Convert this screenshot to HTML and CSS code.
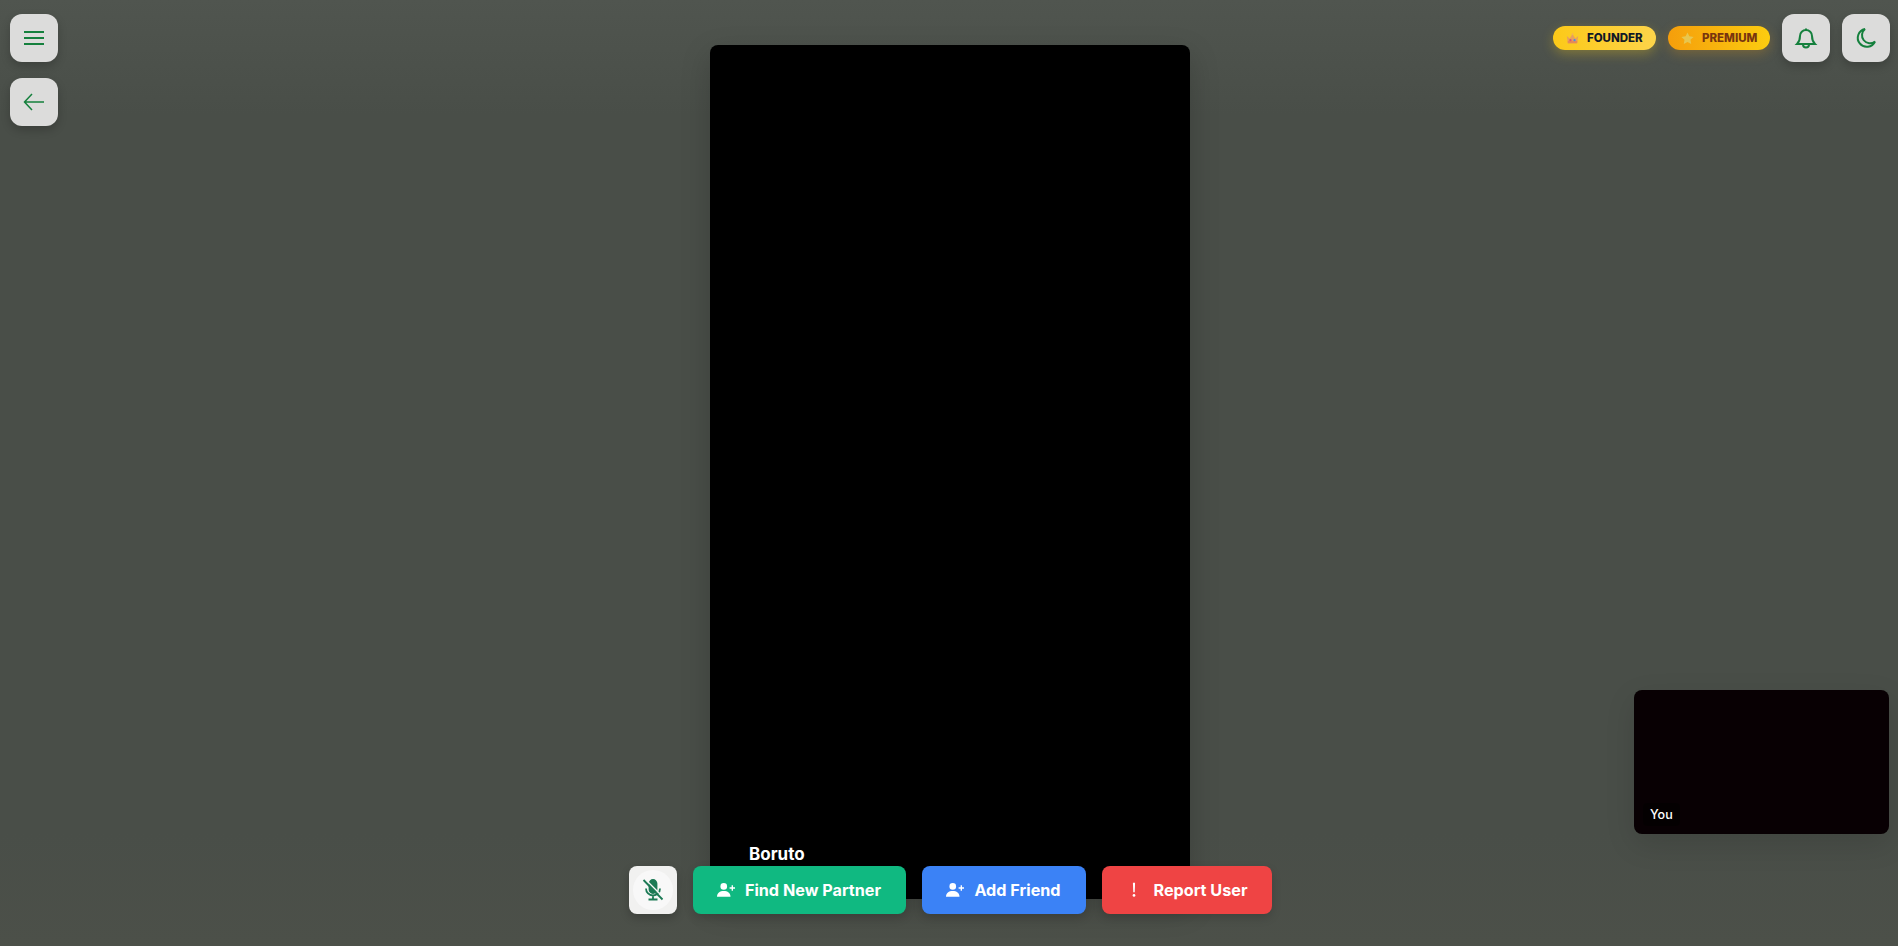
FILE: index.html
```html
<!DOCTYPE html>
<html lang="en">
<head>
  <meta charset="UTF-8">
  <title>Video chat</title>
  <link rel="stylesheet" href="styles.css">
</head>
<body>
  <main class="stage">
    <div class="remote-video"></div>
    <span class="remote-name">Boruto</span>
  </main>

  <div class="top-left">
    <button class="icon-btn" aria-label="Menu">
      <svg viewBox="0 0 24 24" class="icon"><path d="M2 6h20M2 12h20M2 18h20"/></svg>
    </button>
    <button class="icon-btn" aria-label="Back">
      <svg viewBox="0 0 24 24" class="icon thin"><path d="M10 4 2.500 12l7.500 8M2.500 12H22"/></svg>
    </button>
  </div>

  <div class="top-right">
    <span class="badge badge-founder">
      <svg viewBox="0 0 16 16" class="badge-icon">
        <path d="M1 5 4.500 8 8 2.500 11.500 8 15 5l-1.200 8.500H2.200z" fill="#e8a05c"/>
        <rect x="2.200" y="11" width="11.600" height="3" fill="#e58a58"/>
        <circle cx="5.500" cy="10" r="1.400" fill="#d9507a"/>
        <circle cx="10.500" cy="10" r="1.400" fill="#4a8fe0"/>
        <circle cx="8" cy="2.500" r="1.100" fill="#f0b060"/>
      </svg>
      FOUNDER
    </span>
    <span class="badge badge-premium">
      <svg viewBox="0 0 16 16" class="badge-icon">
        <path d="M8 .5l2.300 4.700 5.200.8-3.800 3.600.9 5.200L8 12.400l-4.600 2.400.9-5.200L.5 6l5.200-.8z" fill="#e8c64e"/>
      </svg>
      PREMIUM
    </span>
    <button class="icon-btn" aria-label="Notifications">
      <svg viewBox="0 0 24 24" class="icon"><path d="M12 2.500v1.500M6 10a6 6 0 0 1 12 0c0 4 1.500 6.500 3 8H3c1.500-1.500 3-4 3-8zM9 18.500a3 3 0 0 0 6 0"/></svg>
    </button>
    <button class="icon-btn" aria-label="Dark mode">
      <svg viewBox="0 0 24 24" class="icon"><path d="M11 3a9 9 0 1 0 10 12.500A8 8 0 0 1 11 3z"/></svg>
    </button>
  </div>

  <div class="controls">
    <button class="mic-btn" aria-label="Unmute">
      <span class="mic-inner">
        <svg viewBox="0 0 24 24" class="mic-icon">
          <rect x="8.500" y="2" width="7" height="13" rx="3.500" fill="#1c7a55"/>
          <path d="M5 10.500a7 7 0 0 0 14 0M12 17.500V21.500M7.500 21.500h9"/>
          <path class="mic-gap" d="M4.500 1.500l18 18"/>
          <path d="M2.500 2l19 19.500"/>
        </svg>
      </span>
    </button>
    <button class="action-btn btn-green">
      <svg viewBox="0 0 20 20" class="action-icon">
        <circle cx="7.500" cy="6" r="3.700"/>
        <path d="M0 17.500c0-4.500 3.200-6.500 7.500-6.500s7.500 2 7.500 6.500z"/>
        <path d="M14 7h6v1.500h-6zM16.250 4.750h1.500v6h-1.500z"/>
      </svg>
      Find New Partner
    </button>
    <button class="action-btn btn-blue">
      <svg viewBox="0 0 20 20" class="action-icon">
        <circle cx="7.500" cy="6" r="3.700"/>
        <path d="M0 17.500c0-4.500 3.200-6.500 7.500-6.500s7.500 2 7.500 6.500z"/>
        <path d="M14 7h6v1.500h-6zM16.250 4.750h1.500v6h-1.500z"/>
      </svg>
      Add Friend
    </button>
    <button class="action-btn btn-red">
      <svg viewBox="0 0 20 20" class="action-icon">
        <path d="M8.800 2h2.400l-.4 10.500H9.200z"/>
        <circle cx="10" cy="16" r="1.500"/>
      </svg>
      Report User
    </button>
  </div>

  <aside class="self-video">
    <span class="self-label">You</span>
  </aside>
</body>
</html>
```

FILE: styles.css
```css
* {
  box-sizing: border-box;
}
html, body {
  height: 100%;
}
body {
  margin: 0;
  overflow: hidden;
  background: linear-gradient(180deg, #50554f 0%, #494e48 12%, #494e48 88%, #4c5049 100%);
  font-family: 'Inter', 'Liberation Sans', sans-serif;
  color: #fff;
}
button {
  border: 0;
  padding: 0;
  font: inherit;
  cursor: pointer;
}

/* main video */
.stage {
  position: relative;
  width: 480px;
  height: 100%;
  margin-left: 710px;
  padding-top: 45px;
}
.remote-video {
  width: 480px;
  height: 854px;
  background: #000;
  border-radius: 8px;
  box-shadow: 0 10px 30px rgba(0, 0, 0, 0.18);
}
.remote-name {
  position: absolute;
  left: 39px;
  top: 844px;
  font-size: 17px;
  font-weight: 700;
}

/* round square buttons */
.icon-btn {
  width: 48px;
  height: 48px;
  display: flex;
  align-items: center;
  justify-content: center;
  background: #dcdcdb;
  border-radius: 12px;
  box-shadow: 0 4px 10px rgba(0, 0, 0, 0.2);
}
.icon {
  width: 24px;
  height: 24px;
  fill: none;
  stroke: #15803d;
  stroke-width: 2;
}
.icon.thin {
  stroke-width: 1.500;
}
.top-left {
  position: absolute;
  left: 10px;
  top: 14px;
  display: flex;
  flex-direction: column;
  gap: 16px;
}
.top-right {
  position: absolute;
  right: 8px;
  top: 14px;
  display: flex;
  align-items: center;
  gap: 12px;
}

/* badges */
.badge {
  width: 103px;
  height: 24px;
  display: flex;
  align-items: center;
  padding-left: 13px;
  gap: 8px;
  border-radius: 12px;
  font-size: 11.500px;
  font-weight: 800;
}
.badge-icon {
  width: 13px;
  height: 13px;
  flex: none;
}
.badge-founder {
  background: linear-gradient(90deg, #fcc918, #fdd44a);
  color: #111827;
  box-shadow: 0 4px 12px rgba(250, 204, 21, 0.3);
}
.badge-premium {
  width: 102px;
  background: linear-gradient(90deg, #f59e0b, #fccc10);
  color: #78350f;
  box-shadow: 0 4px 12px rgba(245, 158, 11, 0.25);
}

/* bottom controls */
.controls {
  position: absolute;
  left: 628.500px;
  top: 866px;
  display: flex;
  gap: 16px;
}
.mic-btn {
  width: 48px;
  height: 48px;
  display: flex;
  align-items: center;
  justify-content: center;
  background: #f1f1f0;
  border-radius: 8px;
  box-shadow: 0 4px 10px rgba(0, 0, 0, 0.2);
}
.mic-inner {
  width: 40px;
  height: 40px;
  display: flex;
  align-items: center;
  justify-content: center;
  background: #f8f8f8;
  border-radius: 50%;
}
.mic-icon {
  width: 24px;
  height: 24px;
  fill: none;
  stroke: #1c7a55;
  stroke-width: 1.800;
}
.mic-gap {
  stroke: #f8f8f8;
  stroke-width: 1.500;
}
.action-btn {
  height: 48px;
  display: flex;
  align-items: center;
  justify-content: center;
  gap: 10px;
  border-radius: 8px;
  color: #fff;
  font-size: 16.200px;
  font-weight: 700;
  box-shadow: 0 4px 10px rgba(0, 0, 0, 0.15);
}
.action-icon {
  width: 18px;
  height: 18px;
  fill: #fff;
  flex: none;
}
.btn-green {
  width: 213px;
  background: #10b981;
}
.btn-blue {
  width: 164px;
  background: #3b82f6;
}
.btn-red {
  width: 170px;
  background: #ef4444;
}

/* own camera */
.self-video {
  position: absolute;
  left: 1634px;
  top: 690px;
  width: 255px;
  height: 144px;
  background: #080003;
  border-radius: 8px;
  box-shadow: 0 10px 30px rgba(0, 0, 0, 0.12);
}
.self-label {
  position: absolute;
  left: 9px;
  bottom: 8px;
  padding: 4px 7px;
  font-size: 12.500px;
  font-weight: 500;
  background: rgba(0, 0, 0, 0.4);
  border-radius: 4px;
}
```
